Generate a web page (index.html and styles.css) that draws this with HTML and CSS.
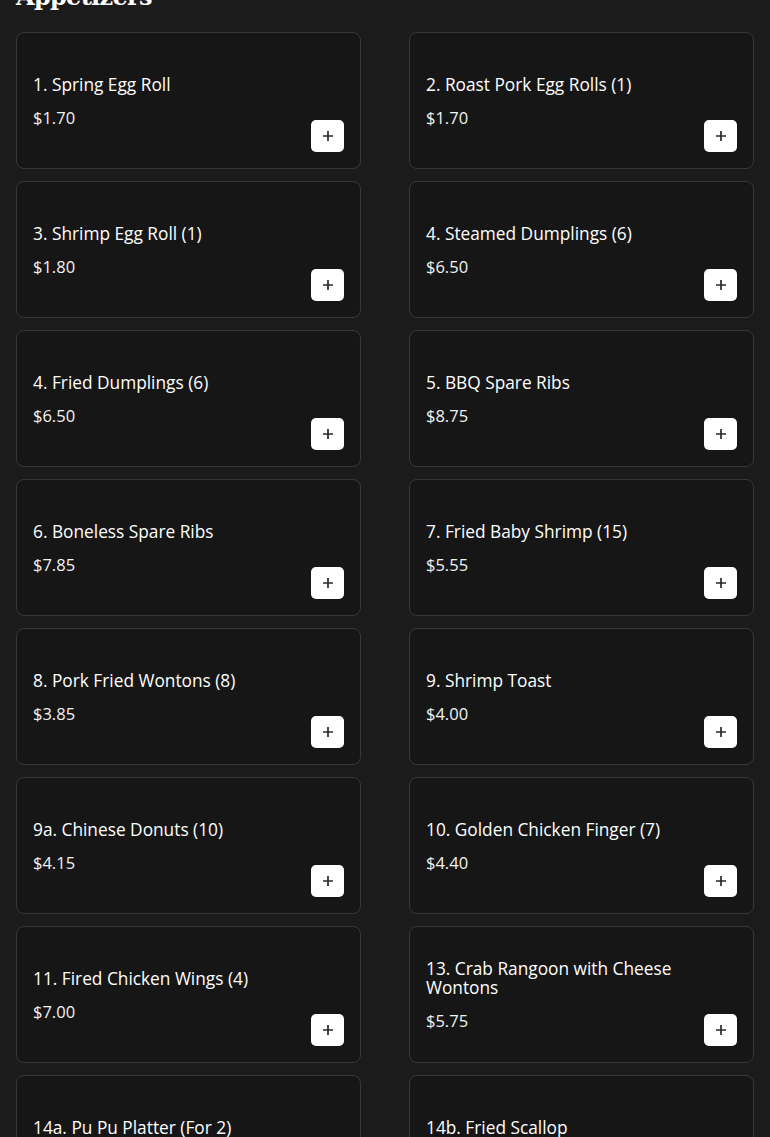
FILE: index.html
```html
<!DOCTYPE html>
<html>
<head>
    <title>Menu - Appetizers</title>
    <link rel="stylesheet" href="styles.css">
</head>
<body>
    <section class="menu-section">
        <h2 class="section-title">Appetizers</h2>
        <div class="item-grid">
            <div class="item-card">
                <div class="item-info">
                    <h3 class="item-name">1. Spring Egg Roll</h3>
                    <span class="item-price">$1.70</span>
                </div>
                <button class="add-button"><svg viewBox="0 0 10 10"><path d="M5 0v10M0 5h10"/></svg></button>
            </div>
            <div class="item-card">
                <div class="item-info">
                    <h3 class="item-name">2. Roast Pork Egg Rolls (1)</h3>
                    <span class="item-price">$1.70</span>
                </div>
                <button class="add-button"><svg viewBox="0 0 10 10"><path d="M5 0v10M0 5h10"/></svg></button>
            </div>
            <div class="item-card">
                <div class="item-info">
                    <h3 class="item-name">3. Shrimp Egg Roll (1)</h3>
                    <span class="item-price">$1.80</span>
                </div>
                <button class="add-button"><svg viewBox="0 0 10 10"><path d="M5 0v10M0 5h10"/></svg></button>
            </div>
            <div class="item-card">
                <div class="item-info">
                    <h3 class="item-name">4. Steamed Dumplings (6)</h3>
                    <span class="item-price">$6.50</span>
                </div>
                <button class="add-button"><svg viewBox="0 0 10 10"><path d="M5 0v10M0 5h10"/></svg></button>
            </div>
            <div class="item-card">
                <div class="item-info">
                    <h3 class="item-name">4. Fried Dumplings (6)</h3>
                    <span class="item-price">$6.50</span>
                </div>
                <button class="add-button"><svg viewBox="0 0 10 10"><path d="M5 0v10M0 5h10"/></svg></button>
            </div>
            <div class="item-card">
                <div class="item-info">
                    <h3 class="item-name">5. BBQ Spare Ribs</h3>
                    <span class="item-price">$8.75</span>
                </div>
                <button class="add-button"><svg viewBox="0 0 10 10"><path d="M5 0v10M0 5h10"/></svg></button>
            </div>
            <div class="item-card">
                <div class="item-info">
                    <h3 class="item-name">6. Boneless Spare Ribs</h3>
                    <span class="item-price">$7.85</span>
                </div>
                <button class="add-button"><svg viewBox="0 0 10 10"><path d="M5 0v10M0 5h10"/></svg></button>
            </div>
            <div class="item-card">
                <div class="item-info">
                    <h3 class="item-name">7. Fried Baby Shrimp (15)</h3>
                    <span class="item-price">$5.55</span>
                </div>
                <button class="add-button"><svg viewBox="0 0 10 10"><path d="M5 0v10M0 5h10"/></svg></button>
            </div>
            <div class="item-card">
                <div class="item-info">
                    <h3 class="item-name">8. Pork Fried Wontons (8)</h3>
                    <span class="item-price">$3.85</span>
                </div>
                <button class="add-button"><svg viewBox="0 0 10 10"><path d="M5 0v10M0 5h10"/></svg></button>
            </div>
            <div class="item-card">
                <div class="item-info">
                    <h3 class="item-name">9. Shrimp Toast</h3>
                    <span class="item-price">$4.00</span>
                </div>
                <button class="add-button"><svg viewBox="0 0 10 10"><path d="M5 0v10M0 5h10"/></svg></button>
            </div>
            <div class="item-card">
                <div class="item-info">
                    <h3 class="item-name">9a. Chinese Donuts (10)</h3>
                    <span class="item-price">$4.15</span>
                </div>
                <button class="add-button"><svg viewBox="0 0 10 10"><path d="M5 0v10M0 5h10"/></svg></button>
            </div>
            <div class="item-card">
                <div class="item-info">
                    <h3 class="item-name">10. Golden Chicken Finger (7)</h3>
                    <span class="item-price">$4.40</span>
                </div>
                <button class="add-button"><svg viewBox="0 0 10 10"><path d="M5 0v10M0 5h10"/></svg></button>
            </div>
            <div class="item-card">
                <div class="item-info">
                    <h3 class="item-name">11. Fired Chicken Wings (4)</h3>
                    <span class="item-price">$7.00</span>
                </div>
                <button class="add-button"><svg viewBox="0 0 10 10"><path d="M5 0v10M0 5h10"/></svg></button>
            </div>
            <div class="item-card">
                <div class="item-info">
                    <h3 class="item-name">13. Crab Rangoon with Cheese Wontons</h3>
                    <span class="item-price">$5.75</span>
                </div>
                <button class="add-button"><svg viewBox="0 0 10 10"><path d="M5 0v10M0 5h10"/></svg></button>
            </div>
            <div class="item-card">
                <div class="item-info">
                    <h3 class="item-name">14a. Pu Pu Platter (For 2)</h3>
                    <span class="item-price">$19.95</span>
                </div>
                <button class="add-button"><svg viewBox="0 0 10 10"><path d="M5 0v10M0 5h10"/></svg></button>
            </div>
            <div class="item-card">
                <div class="item-info">
                    <h3 class="item-name">14b. Fried Scallop</h3>
                    <span class="item-price">$7.95</span>
                </div>
                <button class="add-button"><svg viewBox="0 0 10 10"><path d="M5 0v10M0 5h10"/></svg></button>
            </div>
        </div>
    </section>
</body>
</html>
```

FILE: styles.css
```css
:root {
    --page-bg: #1b1b1b;
    --card-bg: #161616;
    --card-border: #383838;
    --text-color: #ffffff;
    --border-radius: 8px;
}

body {
    margin: 0;
    padding: 0 16px;
    background: var(--page-bg);
    color: var(--text-color);
    font-family: 'Open Sans', 'Liberation Sans', sans-serif;
    overflow: hidden;
}

.section-title {
    font-family: 'DejaVu Serif', 'Liberation Serif', serif;
    font-size: 24px;
    font-weight: 700;
    letter-spacing: -0.7px;
    line-height: 30px;
    margin: -18px 0 20px;
}

.item-grid {
    display: grid;
    grid-template-columns: 1fr 1fr;
    column-gap: 48px;
    row-gap: 12px;
}

.item-card {
    display: flex;
    justify-content: space-between;
    gap: 12px;
    height: 137px;
    box-sizing: border-box;
    padding: 16px;
    background: var(--card-bg);
    border: 1px solid var(--card-border);
    border-radius: var(--border-radius);
}

.item-info {
    align-self: center;
    display: flex;
    flex-direction: column;
    gap: 14px;
}

.item-name {
    margin: 0;
    font-size: 17.3px;
    font-weight: 500;
    line-height: 19px;
}

.item-price {
    font-size: 16.5px;
    font-weight: 400;
    line-height: 19px;
    color: #f2f2f2;
}

.add-button {
    align-self: flex-end;
    display: flex;
    align-items: center;
    justify-content: center;
    flex-shrink: 0;
    width: 33px;
    height: 32px;
    padding: 0;
    border: none;
    border-radius: 5px;
    background: #ffffff;
    cursor: pointer;
}

.add-button svg {
    width: 10px;
    height: 10px;
    stroke: #2a2a2a;
    stroke-width: 1.7;
    fill: none;
}
```
